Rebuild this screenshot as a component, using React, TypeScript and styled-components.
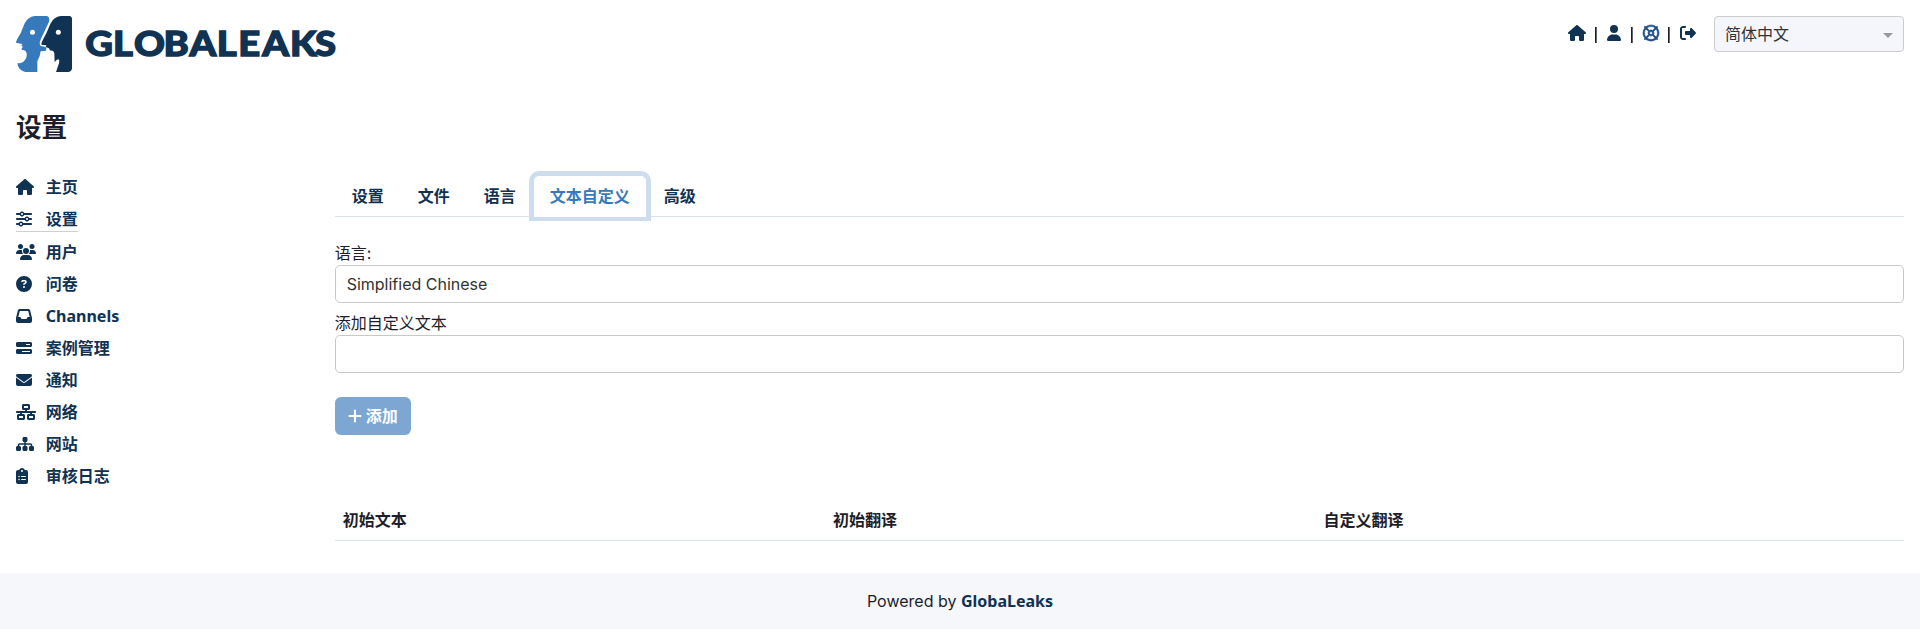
import React from 'react';
import styled, { createGlobalStyle, css } from 'styled-components';
import {
  FaHouse, FaUser, FaRegLifeRing, FaRightFromBracket, FaSliders, FaUsers, FaCircleQuestion,
  FaInbox, FaBarsProgress, FaEnvelope, FaNetworkWired, FaSitemap, FaClipboardList, FaPlus,
} from 'react-icons/fa6';

const navy = '#103253';
const boldFont = '700 16px/24px "Noto Sans", "Noto Sans CJK SC", sans-serif';

const Global = createGlobalStyle`
  *, *::before, *::after { box-sizing: border-box; }
  body {
    margin: 0;
    background: #fff;
    color: #1e1e2a;
    font: 400 16px/24px Inter, "Noto Sans CJK SC", sans-serif;
  }
  svg { display: block; flex: none; }
`;

const Page = styled.div`
  display: flex;
  flex-direction: column;
  height: 629px;
`;
const Header = styled.header`
  display: flex;
  justify-content: space-between;
  align-items: flex-start;
  height: 104px;
  padding: 16px 16px 0;
`;
const Tools = styled.div`
  display: flex;
  align-items: center;
`;
const ToolIcon = styled.a<{ $width: number; $tone?: string }>`
  display: flex;
  height: 36px;
  padding-bottom: 2px;
  align-items: center;
  color: ${p => p.$tone || navy};
  svg { width: ${p => p.$width}px; height: 16px; }
  ${p => p.$tone && css`svg { stroke: currentColor; stroke-width: 20px; overflow: visible; }`}
`;
const Divider = styled.span`
  width: 2px;
  height: 16px;
  margin: 2px 10px 0 9.5px;
  background: linear-gradient(to right, #1e1e2a 50%, #66666f 50%);
`;
const Picker = styled.div`
  display: flex;
  align-items: center;
  justify-content: space-between;
  width: 190px;
  height: 36px;
  margin-left: 18px;
  padding: 0 10px;
  border: 1px solid #ccc;
  border-radius: 4px;
  background: #f5f6fb;
  color: #333;
`;
const Caret = styled.span`
  margin-top: 2px;
  border: 5px solid transparent;
  border-top-color: #999;
  border-bottom: 0;
`;
const Title = styled.h1`
  margin: 0;
  padding: 8px 16px 0;
  height: 66px;
  font: 700 25.6px/31px "Noto Sans", "Noto Sans CJK SC", sans-serif;
`;
const Body = styled.div`
  display: flex;
  flex: 1;
`;
const Side = styled.nav`
  display: flex;
  flex-direction: column;
  align-items: flex-start;
  width: 334.66px;
  padding: 1px 16px 0;
`;
const SideLink = styled.a<{ $active?: boolean }>`
  display: flex;
  align-items: center;
  height: ${p => (p.$active ? 25 : 24)}px;
  margin: 4px 0;
  color: ${navy};
  font: ${boldFont};
  ${p => p.$active && css`border-bottom: 1px solid #c5d0e6;`}
`;
const SideIcon = styled.span<{ $width: number }>`
  width: 29.8px;
  svg { width: ${p => p.$width}px; height: 16px; }
`;
const Main = styled.main`
  flex: 1;
  padding-right: 16px;
`;
const Tabs = styled.div`
  display: flex;
  height: 47px;
  padding-top: 5px;
  border-bottom: 1px solid #dbe2ef;
`;
const Tab = styled.a<{ $active?: boolean }>`
  height: 42px;
  padding: 8px 16px 0;
  border: 1px solid transparent;
  border-bottom: 0;
  color: ${navy};
  font: ${boldFont};
  ${p => p.$active && css`
    color: #377abc;
    background: #fff;
    border-color: #cdddee;
    border-radius: 6px 6px 0 0;
    box-shadow: 0 0 0 4px #cdddee;
  `}
`;
const Field = styled.label`
  display: block;
  margin-bottom: 8px;
`;
const Form = styled.div`
  padding-top: 24px;
`;
const Input = styled.div`
  height: 38px;
  padding: 6px 11px;
  border: 1px solid #c7c9c9;
  border-radius: 5px;
  color: #333;
`;
const AddButton = styled.button`
  display: flex;
  align-items: center;
  gap: 4px;
  width: 76px;
  height: 38px;
  margin-top: 24px;
  padding: 0 0 0 13px;
  border: 0;
  border-radius: 6px;
  background: #7da6d3;
  color: #fff;
  font: ${boldFont};
  white-space: nowrap;
  svg { width: 14px; height: 16px; }
`;
const TableHead = styled.div`
  display: grid;
  grid-template-columns: 490.4px 490.4px 1fr;
  height: 41px;
  margin-top: 65px;
  border-bottom: 1px solid #dbe2ef;
`;
const Th = styled.div`
  padding: 8px;
  font: ${boldFont};
`;
const Footer = styled.footer`
  height: 56px;
  padding-top: 16px;
  background: #f5f7fb;
  text-align: center;
  b { color: ${navy}; font-family: "Noto Sans", sans-serif; }
`;

function Logo() {
  return (
    <svg width="324" height="56" viewBox="48 48 972 168">
      <path fill="#377abc" d="M104 48H140Q150 50 147 65L121 121Q117 132 122 138L137 141Q141 146 138 152L122 154L119 168L112 184V216H76Q54 210 52 190Q66 190 73 182Q82 174 80 160Q77 149 66 150Q62 145 69 140L64 138L67 132L48 128Q48 122 62 100L74 70Q84 50 104 48Z" />
      <path fill={navy} d="M182 48H208Q216 49 216 57V206Q214 215 204 216H168L177 190Q180 179 174 178Q168 179 164 187L163 160Q160 149 153 152Q149 152 147 145L137 141L139 136L124 134Q123 128 138 102L152 70Q162 50 182 48Z" />
      <circle cx="97.500" cy="97" r="7.500" fill="#fff" />
      <circle cx="175" cy="97" r="7.500" fill="#fff" />
      <text
        transform="scale(1.1 1)"
        x="232.500 308.500 365.500 446 517 591 649.500 715.500 791 859"
        y="169" fill={navy} stroke={navy} strokeWidth="4" fontFamily="Lato" fontWeight="900" fontSize="104"
      >GLOBALEAKS</text>
    </svg>
  );
}

const links = [
  ['主页', FaHouse, 18], ['设置', FaSliders, 16], ['用户', FaUsers, 20], ['问卷', FaCircleQuestion, 16],
  ['Channels', FaInbox, 16], ['案例管理', FaBarsProgress, 16], ['通知', FaEnvelope, 16],
  ['网络', FaNetworkWired, 20], ['网站', FaSitemap, 18], ['审核日志', FaClipboardList, 12],
] as const;
const tabs = ['设置', '文件', '语言', '文本自定义', '高级'];

export default function App() {
  return (
    <Page>
      <Global />
      <Header>
        <Logo />
        <Tools>
          <ToolIcon $width={18}><FaHouse /></ToolIcon><Divider />
          <ToolIcon $width={14}><FaUser /></ToolIcon><Divider />
          <ToolIcon $width={16} $tone="#1d4f86"><FaRegLifeRing /></ToolIcon><Divider />
          <ToolIcon $width={16}><FaRightFromBracket /></ToolIcon>
          <Picker>简体中文<Caret /></Picker>
        </Tools>
      </Header>
      <Title>设置</Title>
      <Body>
        <Side>
          {links.map(([label, Icon, width]) => (
            <SideLink key={label} $active={label === '设置'}><SideIcon $width={width}><Icon /></SideIcon>{label}</SideLink>
          ))}
        </Side>
        <Main>
          <Tabs>{tabs.map(t => <Tab key={t} $active={t === '文本自定义'}>{t}</Tab>)}</Tabs>
          <Form>
            <Field>语言:<Input>Simplified Chinese</Input></Field>
            <Field>添加自定义文本<Input /></Field>
            <AddButton><FaPlus />添加</AddButton>
          </Form>
          <TableHead><Th>初始文本</Th><Th>初始翻译</Th><Th>自定义翻译</Th></TableHead>
        </Main>
      </Body>
      <Footer>Powered by <b>GlobaLeaks</b></Footer>
    </Page>
  );
}
